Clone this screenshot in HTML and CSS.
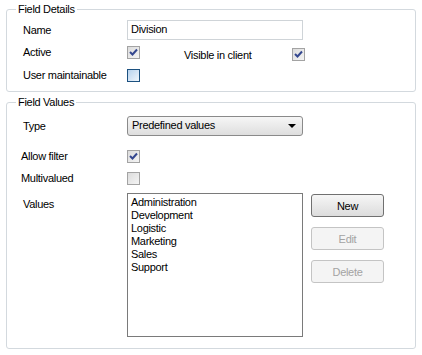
FILE: index.html
```html
<!DOCTYPE html>
<html lang="en">
<head>
    <meta charset="UTF-8">
    <title>Field Editor</title>
    <link rel="stylesheet" href="styles.css">
</head>
<body>
    <fieldset class="group details">
        <legend>Field Details</legend>
        <div class="row row-name">
            <span class="label">Name</span>
            <span class="textbox">Division</span>
        </div>
        <div class="row row-active">
            <span class="label">Active</span>
            <span class="check checked disabled">
                <svg width="9" height="9" viewBox="0 0 9 9"><path d="M1 4 L3.5 6.5 L8 1.5" fill="none" stroke="#34478f" stroke-width="2"/></svg>
            </span>
            <span class="label visible">Visible in client</span>
            <span class="check checked disabled visible-box">
                <svg width="9" height="9" viewBox="0 0 9 9"><path d="M1 4 L3.5 6.5 L8 1.5" fill="none" stroke="#34478f" stroke-width="2"/></svg>
            </span>
        </div>
        <div class="row row-user">
            <span class="label">User maintainable</span>
            <span class="check enabled"></span>
        </div>
    </fieldset>

    <fieldset class="group values">
        <legend>Field Values</legend>
        <div class="row row-type">
            <span class="label">Type</span>
            <span class="select">Predefined values<span class="arrow"></span></span>
        </div>
        <div class="row row-filter">
            <span class="label narrow">Allow filter</span>
            <span class="check checked disabled">
                <svg width="9" height="9" viewBox="0 0 9 9"><path d="M1 4 L3.5 6.5 L8 1.5" fill="none" stroke="#34478f" stroke-width="2"/></svg>
            </span>
        </div>
        <div class="row row-multi">
            <span class="label narrow">Multivalued</span>
            <span class="check disabled"></span>
        </div>
        <div class="row row-values">
            <span class="label">Values</span>
            <ul class="listbox">
                <li>Administration</li>
                <li>Development</li>
                <li>Logistic</li>
                <li>Marketing</li>
                <li>Sales</li>
                <li>Support</li>
            </ul>
            <div class="buttons">
                <button class="btn">New</button>
                <button class="btn" disabled>Edit</button>
                <button class="btn" disabled>Delete</button>
            </div>
        </div>
    </fieldset>
</body>
</html>
```

FILE: styles.css
```css
* {
    box-sizing: border-box;
}

body {
    margin: 0;
    padding-top: 3px;
    background: #fff;
    color: #000;
    font-family: 'Liberation Sans', Arial, sans-serif;
    font-size: 11px;
    letter-spacing: -0.3px;
    line-height: 13px;
}

.group {
    margin: 0 6px 0 6px;
    padding: 0 0 0 16px;
    border: 1px solid #d3d9de;
    border-radius: 3px;
    min-width: 0;
}

.group legend {
    margin-left: -7px;
    padding: 0 2px;
    height: 13px;
    line-height: 13px;
}

.details {
    padding-bottom: 9px;
}

.values {
    margin-top: 4px;
    padding-bottom: 11px;
}

.row {
    display: flex;
    align-items: center;
}

.label {
    width: 104px;
    flex-shrink: 0;
}

.label.narrow {
    margin-left: -2px;
    width: 106px;
}

.row-name {
    margin-top: 4px;
    height: 20px;
}

.textbox {
    width: 176px;
    height: 20px;
    border: 1px solid #cfd4d8;
    padding: 2px 3px;
}

.row-active {
    margin-top: 6px;
    height: 13px;
}

.label.visible {
    width: auto;
    margin-left: 44px;
    position: relative;
    top: 3px;
}

.visible-box {
    position: relative;
    top: 2px;
    margin-left: 41px;
}

.row-user {
    margin-top: 10px;
    height: 13px;
}

.check {
    display: inline-flex;
    align-items: center;
    justify-content: center;
    width: 13px;
    height: 13px;
    flex-shrink: 0;
}

.check.disabled {
    border: 1px solid #a3a3a3;
    background: linear-gradient(135deg, #dcdcdc, #f4f4f4);
}

.check.enabled {
    border: 1px solid #1c5180;
    background: linear-gradient(135deg, #b8d3ee, #f0f6fc);
}

.row-type {
    margin-top: 7px;
    height: 20px;
}

.select {
    position: relative;
    width: 176px;
    height: 20px;
    border: 1px solid #8a8a8a;
    border-radius: 3px;
    background: linear-gradient(#f6f6f6, #dedede);
    padding: 2px 4px;
}

.arrow {
    position: absolute;
    right: 6px;
    top: 7px;
    width: 0;
    height: 0;
    border-left: 4px solid transparent;
    border-right: 4px solid transparent;
    border-top: 4px solid #000;
}

.row-filter {
    margin-top: 14px;
    height: 13px;
}

.row-multi {
    margin-top: 9px;
    height: 13px;
}

.row-values {
    margin-top: 8px;
    align-items: flex-start;
}

.row-values .label {
    margin-top: 5px;
}

.listbox {
    list-style: none;
    margin: 0;
    padding: 2px 3px;
    width: 176px;
    height: 144px;
    border: 1px solid #7a7a7a;
}

.buttons {
    display: flex;
    flex-direction: column;
    gap: 10px;
    margin-left: 8px;
    margin-top: 1px;
}

.btn {
    width: 73px;
    height: 23px;
    font-family: inherit;
    font-size: 11px;
    letter-spacing: -0.3px;
    color: #000;
    border: 1px solid #707070;
    border-radius: 3px;
    background: linear-gradient(#f6f6f6, #dcdcdc);
    padding: 0;
}

.btn:disabled {
    color: #a3a3a3;
    border-color: #c4c4c4;
    background: #f4f4f4;
}
```
